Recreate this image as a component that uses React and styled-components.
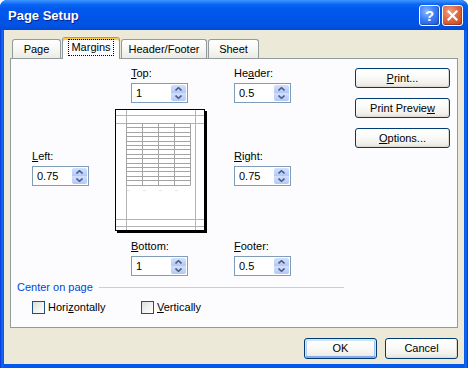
import React from 'react';
import styled, { createGlobalStyle, css } from 'styled-components';

const GlobalStyle = createGlobalStyle`
  html, body { margin: 0; padding: 0; background: #fff; }
  body {
    font-family: "Liberation Sans", Arial, sans-serif;
    font-size: 11px;
    color: #000;
  }
`;

const Window = styled.div`
  width: 468px;
  height: 368px;
  display: flex;
  flex-direction: column;
  background: linear-gradient(90deg, #0831D9 0px, #166AEE 2px, #0058EE 4px, #0058EE 464px, #166AEE 466px, #0831D9 468px);
  border-radius: 7px 7px 0 0;
  overflow: hidden;
`;

const TitleBar = styled.div`
  height: 30px;
  flex: none;
  display: flex;
  align-items: center;
  gap: 2px;
  padding: 0 5px 0 8px;
  background: linear-gradient(180deg, #3D95FF 0%, #2C83FA 6%, #0A66F5 14%, #0058EE 30%, #0055E8 60%, #0053E3 85%, #0049D6 100%);
`;

const Title = styled.div`
  flex: 1;
  color: #fff;
  font: bold 13px "Liberation Sans", Arial, sans-serif;
  text-shadow: 1px 1px 0 #0A1E8C;
  padding-top: 1px;
`;

const CaptionButton = styled.div`
  width: 21px;
  height: 21px;
  box-sizing: border-box;
  border: 1px solid #fff;
  border-radius: 3px;
  display: flex;
  align-items: center;
  justify-content: center;
  color: #fff;
  font: bold 15px "Liberation Sans", Arial, sans-serif;
  background: ${p => p.$close
    ? 'radial-gradient(circle at 35% 30%, #F0A080 0%, #E06A42 45%, #C8441C 100%)'
    : 'radial-gradient(circle at 35% 30%, #8DB8FF 0%, #3D7EF5 45%, #1C56D8 100%)'};
  box-shadow: inset -1px -1px 1px rgba(0, 0, 0, 0.25);
`;

const Client = styled.div`
  flex: 1;
  margin: 0 4px 4px;
  background: #ECE9D8;
  padding: 7px 6px 5px;
  display: flex;
  flex-direction: column;
`;

const TabStrip = styled.div`
  height: 21px;
  display: flex;
  align-items: flex-end;
  gap: 1px;
  padding-left: 2px;
`;

const Tab = styled.div`
  box-sizing: border-box;
  width: ${p => p.$w}px;
  height: 19px;
  border: 1px solid #919B9C;
  border-bottom: none;
  border-radius: 3px 3px 0 0;
  background: linear-gradient(180deg, #FFFFFF 0%, #F7F7F4 50%, #ECEBE6 100%);
  display: flex;
  align-items: center;
  justify-content: center;
  line-height: 13px;
  padding-top: 1px;
  ${p => p.$active && css`
    height: 22px;
    margin-bottom: -1px;
    position: relative;
    z-index: 1;
    background: #FCFCFE;
    border-top: 1px solid #E68B2C;
    box-shadow: inset 0 2px 0 #FFC73C;
    align-items: flex-start;
    padding-top: 3px;
  `}
`;

const FocusText = styled.span`
  outline: 1px dotted #000;
  outline-offset: 1px;
  padding: 0 1px;
`;

const Panel = styled.div`
  box-sizing: border-box;
  height: 270px;
  border: 1px solid #919B9C;
  background: #FCFCFE;
  padding: 8px 7px 0 6px;
  display: grid;
  grid-template-columns: 1fr 95px;
  grid-template-rows: auto auto;
  align-content: start;
  align-items: start;
`;

const MarginsGrid = styled.div`
  margin-left: 15px;
  display: grid;
  grid-template-columns: 83px 119px 1fr;
  grid-template-rows: 36px 124px 37px;
  row-gap: 6px;
`;

const Field = styled.div`
  grid-column: ${p => p.$col};
  grid-row: ${p => p.$row};
  margin-left: ${p => p.$ml || 0}px;
  margin-top: ${p => p.$mt || 0}px;
  display: flex;
  flex-direction: column;
`;

const FieldLabel = styled.div`
  line-height: 13px;
  margin-bottom: 3px;
`;

const Key = styled.span`
  text-decoration: underline;
`;

const SpinBox = styled.div`
  box-sizing: border-box;
  width: 57px;
  height: 20px;
  border: 1px solid #7F9DB9;
  background: #fff;
  display: flex;
`;

const SpinValue = styled.div`
  flex: 1;
  padding-left: 4px;
  line-height: 18px;
`;

const SpinButtons = styled.div`
  width: 15px;
  margin: 1px;
  display: flex;
  flex-direction: column;
`;

const SpinArrow = styled.div`
  flex: 1;
  display: flex;
  align-items: center;
  justify-content: center;
  background: linear-gradient(180deg, #D2DFFD 0%, #C0D2FB 60%, #B2C7F6 100%);
  border-radius: ${p => (p.$down ? '0 0 2px 2px' : '2px 2px 0 0')};
`;

const PreviewBox = styled.div`
  grid-column: 2;
  grid-row: 2;
`;

const ButtonColumn = styled.div`
  margin-top: 1px;
  display: flex;
  flex-direction: column;
  gap: 10px;
`;

const Button = styled.div`
  box-sizing: border-box;
  width: ${p => p.$w}px;
  height: ${p => p.$h}px;
  border: 1px solid #003C74;
  border-radius: 3px;
  background: linear-gradient(180deg, #FFFFFF 0%, #FBFBF9 40%, #F1F0EB 80%, #E3E1D8 100%);
  box-shadow: inset -1px -1px 0 #E0DDD3;
  display: flex;
  align-items: center;
  justify-content: center;
  line-height: 13px;
  ${p => p.$default && css`
    box-shadow: inset 0 1px 0 1px #CEE7FF, inset 0 -1px 0 1px #8AA8EC, inset 1px 0 0 1px #B8D0F8, inset -1px 0 0 1px #A4BEF2;
  `}
`;

const CenterGroup = styled.div`
  grid-column: 1 / span 2;
  width: 327px;
  margin-top: 5px;
`;

const Legend = styled.div`
  display: flex;
  align-items: center;
  color: #0046D5;
  line-height: 13px;
`;

const LegendRule = styled.div`
  flex: 1;
  height: 1px;
  margin-left: 6px;
  background: #D0D0BF;
`;

const CheckRow = styled.div`
  display: flex;
  margin-top: 7px;
  padding-left: 15px;
`;

const CheckItem = styled.div`
  width: ${p => p.$w}px;
  display: flex;
  align-items: center;
  gap: 3px;
  line-height: 13px;
`;

const CheckBox = styled.div`
  box-sizing: border-box;
  width: 13px;
  height: 13px;
  border: 1px solid #1C5180;
  background: linear-gradient(135deg, #DCDCD7 0%, #F4F4F1 60%, #FFFFFF 100%);
`;

const Footer = styled.div`
  display: flex;
  justify-content: flex-end;
  gap: 8px;
  margin-top: 10px;
`;

function Chevron({ down }) {
  return (
    <svg width="7" height="4" viewBox="0 0 7 4">
      <path
        d={down ? 'M0.5 0.5 L3.5 3.3 L6.5 0.5' : 'M0.5 3.5 L3.5 0.7 L6.5 3.5'}
        fill="none"
        stroke="#4D6185"
        strokeWidth="1.6"
      />
    </svg>
  );
}

function Spinner({ value }) {
  return (
    <SpinBox>
      <SpinValue>{value}</SpinValue>
      <SpinButtons>
        <SpinArrow><Chevron /></SpinArrow>
        <SpinArrow $down><Chevron down /></SpinArrow>
      </SpinButtons>
    </SpinBox>
  );
}

function MarginField({ col, row, ml, mt, label, value }) {
  return (
    <Field $col={col} $row={row} $ml={ml} $mt={mt}>
      <FieldLabel>{label}</FieldLabel>
      <Spinner value={value} />
    </Field>
  );
}

function PagePreview() {
  const rows = Array.from({ length: 15 }, (_, i) => 14.5 + Math.round(i * 4.4));
  const cols = [11.5, 27.5, 43.5, 59.5, 75.5];
  const tableBottom = rows[rows.length - 1];
  return (
    <svg width="92" height="124" viewBox="0 0 92 124">
      <rect x="2" y="2" width="90" height="122" fill="#000" />
      <rect x="0.5" y="0.5" width="89" height="121" fill="#fff" stroke="#000" />
      {[11.5, 80.5].map(x => (
        <line key={x} x1={x} y1="1" x2={x} y2="121" stroke="#B4B4B4" />
      ))}
      {[6.5, 14.5, 110.5, 117.5].map(y => (
        <line key={y} x1="1" y1={y} x2="89" y2={y} stroke="#B4B4B4" />
      ))}
      {rows.map(y => (
        <line key={y} x1="11.5" y1={y} x2="75.5" y2={y} stroke="#A4A4A4" />
      ))}
      {cols.map(x => (
        <line key={x} x1={x} y1="14.5" x2={x} y2={tableBottom} stroke="#A4A4A4" />
      ))}
      <line x1="12" y1="81.5" x2="75" y2="81.5" stroke="#E2E2E2" strokeDasharray="3 13" />
    </svg>
  );
}

export default function App() {
  return (
    <>
      <GlobalStyle />
      <Window>
        <TitleBar>
          <Title>Page Setup</Title>
          <CaptionButton>?</CaptionButton>
          <CaptionButton $close>
            <svg width="11" height="11" viewBox="0 0 11 11">
              <path d="M1.5 1.5 L9.5 9.5 M9.5 1.5 L1.5 9.5" stroke="#fff" strokeWidth="2.2" strokeLinecap="square" />
            </svg>
          </CaptionButton>
        </TitleBar>
        <Client>
          <TabStrip>
            <Tab $w={49}>Page</Tab>
            <Tab $w={58} $active><FocusText>Margins</FocusText></Tab>
            <Tab $w={86}>Header/Footer</Tab>
            <Tab $w={51}>Sheet</Tab>
          </TabStrip>
          <Panel>
            <MarginsGrid>
              <MarginField col={2} row={1} ml={16} label={<><Key>T</Key>op:</>} value="1" />
              <MarginField col={3} row={1} label={<>He<Key>a</Key>der:</>} value="0.5" />
              <MarginField col={1} row={2} mt={41} label={<><Key>L</Key>eft:</>} value="0.75" />
              <PreviewBox><PagePreview /></PreviewBox>
              <MarginField col={3} row={2} mt={41} label={<><Key>R</Key>ight:</>} value="0.75" />
              <MarginField col={2} row={3} ml={16} mt={1} label={<><Key>B</Key>ottom:</>} value="1" />
              <MarginField col={3} row={3} mt={1} label={<><Key>F</Key>ooter:</>} value="0.5" />
            </MarginsGrid>
            <ButtonColumn>
              <Button $w={95} $h={20}><Key>P</Key>rint...</Button>
              <Button $w={95} $h={20}>Print Previe<Key>w</Key></Button>
              <Button $w={95} $h={20}><Key>O</Key>ptions...</Button>
            </ButtonColumn>
            <CenterGroup>
              <Legend>Center on page<LegendRule /></Legend>
              <CheckRow>
                <CheckItem $w={109}><CheckBox /><span>Hori<Key>z</Key>ontally</span></CheckItem>
                <CheckItem $w={100}><CheckBox /><span><Key>V</Key>ertically</span></CheckItem>
              </CheckRow>
            </CenterGroup>
          </Panel>
          <Footer>
            <Button $w={73} $h={21} $default>OK</Button>
            <Button $w={73} $h={21}>Cancel</Button>
          </Footer>
        </Client>
      </Window>
    </>
  );
}
